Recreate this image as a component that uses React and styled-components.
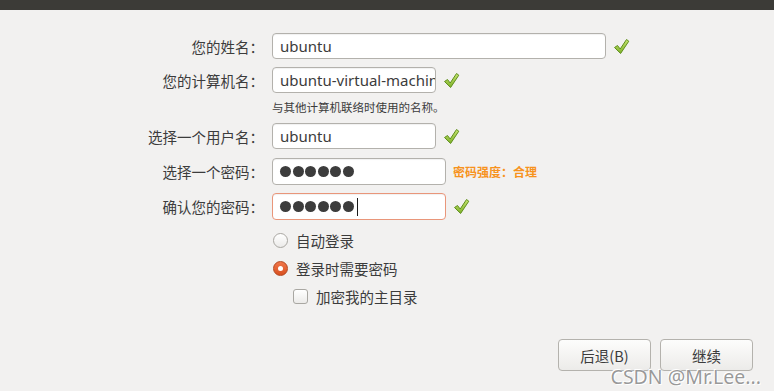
import React from "react"
import styled, { createGlobalStyle } from "styled-components"

const GlobalStyle = createGlobalStyle`
  body {
    margin: 0;
    background: #f2f1f0;
    font-family: "Noto Sans", "Noto Sans CJK SC", sans-serif;
  }
`

const Page = styled.div`
  position: relative;
  width: 774px;
  height: 391px;
  overflow: hidden;
  background: #f2f1f0;
  color: #3c3c3c;
`

const TopBar = styled.div`
  height: 10px;
  background: #3c3b37;
`

const Form = styled.div`
  display: flex;
  flex-direction: column;
  padding-top: 23px;
`

const Row = styled.div`
  display: flex;
  align-items: center;
  margin-top: ${(p) => p.$mt || 0}px;
  height: ${(p) => p.$h || 26}px;
`

const Label = styled.div`
  width: 264px;
  margin-right: 8px;
  text-align: right;
  font-family: "Noto Sans CJK SC", sans-serif;
  font-size: 14.5px;
  color: #3c3c3c;
  white-space: nowrap;
`

const Field = styled.div`
  box-sizing: border-box;
  width: ${(p) => p.$w}px;
  height: 100%;
  display: flex;
  align-items: center;
  padding: 0 7px;
  background: #ffffff;
  border: 1px solid ${(p) => (p.$error ? "#e9967a" : "#b3b1ac")};
  border-radius: 4px;
  box-shadow: inset 0 1px 1px rgba(0, 0, 0, 0.06);
  overflow: hidden;
  white-space: nowrap;
  font-family: "Noto Sans", sans-serif;
  font-size: 15px;
  color: #3c3c3c;
`

const Dots = styled.div`
  display: flex;
  gap: 1.6px;
  align-items: center;
`

const Dot = styled.span`
  width: 11px;
  height: 11px;
  border-radius: 50%;
  background: #3c3c3c;
`

const Caret = styled.span`
  width: 1px;
  height: 18px;
  margin-left: 1px;
  background: #1a1a1a;
`

const CheckWrap = styled.div`
  margin-left: 7px;
  display: flex;
  align-items: center;
`

const Hint = styled.div`
  margin-left: 272px;
  margin-top: 6px;
  height: 17px;
  font-family: "Noto Sans CJK SC", sans-serif;
  font-size: 11.5px;
  line-height: 17px;
  color: #3c3c3c;
`

const Strength = styled.div`
  margin-left: 7px;
  font-family: "Noto Sans CJK SC", sans-serif;
  font-size: 12px;
  font-weight: 700;
  color: #f7931e;
`

const Option = styled.label`
  display: flex;
  align-items: center;
  gap: 8px;
  margin-left: ${(p) => p.$indent || 273}px;
  margin-top: ${(p) => p.$mt}px;
  height: 18px;
  font-family: "Noto Sans CJK SC", sans-serif;
  font-size: 14.5px;
  color: #3c3c3c;
`

const Radio = styled.span`
  box-sizing: border-box;
  width: 15px;
  height: 15px;
  border-radius: 50%;
  display: flex;
  align-items: center;
  justify-content: center;
  border: 1px solid ${(p) => (p.$on ? "#b3471f" : "#a9a7a2")};
  background: ${(p) =>
    p.$on
      ? "linear-gradient(#f0764a, #d9501f)"
      : "linear-gradient(#ffffff, #ecebe9)"};
  &::after {
    content: "";
    display: ${(p) => (p.$on ? "block" : "none")};
    width: 5px;
    height: 5px;
    border-radius: 50%;
    background: #ffffff;
  }
`

const Box = styled.span`
  box-sizing: border-box;
  width: 15px;
  height: 15px;
  border-radius: 3px;
  border: 1px solid #a9a7a2;
  background: linear-gradient(#ffffff, #ecebe9);
`

const Buttons = styled.div`
  display: flex;
  justify-content: flex-end;
  gap: 9px;
  padding-right: 21px;
  margin-top: 34px;
`

const Button = styled.button`
  box-sizing: border-box;
  width: 93px;
  height: 32px;
  border: 1px solid #b4b2ad;
  border-radius: 4px;
  background: linear-gradient(#fdfdfc, #ecebe9);
  font-family: "Noto Sans CJK SC", sans-serif;
  font-size: 14.5px;
  color: #3c3c3c;
  padding: 0;
`

const Watermark = styled.div`
  position: absolute;
  right: 13px;
  bottom: 1px;
  font-family: "Noto Sans", sans-serif;
  font-size: 19.5px;
  color: rgba(135, 135, 135, 0.85);
  text-shadow: 0 0 1px #fff, 1px 1px 0 #fff, -1px -1px 0 #fff;
  pointer-events: none;
`

const Check = () => (
  <CheckWrap>
    <svg width="17" height="17" viewBox="0 0 17 17">
      <defs>
        <linearGradient id="cg" x1="0" y1="0" x2="0" y2="1">
          <stop offset="0" stopColor="#c6e56f" />
          <stop offset="1" stopColor="#7fb12a" />
        </linearGradient>
      </defs>
      <path
        d="M1.5 9.5 L4.5 7.5 L7.2 11 L13.5 1.5 L15.8 3.2 L7.6 15.5 Z"
        fill="url(#cg)"
        stroke="#5f8f1d"
        strokeWidth="1"
        strokeLinejoin="round"
      />
    </svg>
  </CheckWrap>
)

const PasswordDots = ({ caret }) => (
  <Dots>
    {[0, 1, 2, 3, 4, 5].map((i) => (
      <Dot key={i} />
    ))}
    {caret && <Caret />}
  </Dots>
)

export default function App() {
  return (
    <Page>
      <GlobalStyle />
      <TopBar />
      <Form>
        <Row>
          <Label>您的姓名：</Label>
          <Field $w={334}>ubuntu</Field>
          <Check />
        </Row>
        <Row $mt={8}>
          <Label>您的计算机名：</Label>
          <Field $w={164}>ubuntu-virtual-machine</Field>
          <Check />
        </Row>
        <Hint>与其他计算机联络时使用的名称。</Hint>
        <Row $mt={7}>
          <Label>选择一个用户名：</Label>
          <Field $w={164}>ubuntu</Field>
          <Check />
        </Row>
        <Row $mt={9} $h={27}>
          <Label>选择一个密码：</Label>
          <Field $w={174}>
            <PasswordDots />
          </Field>
          <Strength>密码强度：合理</Strength>
        </Row>
        <Row $mt={8} $h={27}>
          <Label>确认您的密码：</Label>
          <Field $w={174} $error>
            <PasswordDots caret />
          </Field>
          <Check />
        </Row>
        <Option $mt={11}>
          <Radio />
          自动登录
        </Option>
        <Option $mt={10}>
          <Radio $on />
          登录时需要密码
        </Option>
        <Option $mt={10} $indent={293}>
          <Box />
          加密我的主目录
        </Option>
        <Buttons>
          <Button>后退(B)</Button>
          <Button>继续</Button>
        </Buttons>
      </Form>
      <Watermark>CSDN @Mr.Lee...</Watermark>
    </Page>
  )
}
